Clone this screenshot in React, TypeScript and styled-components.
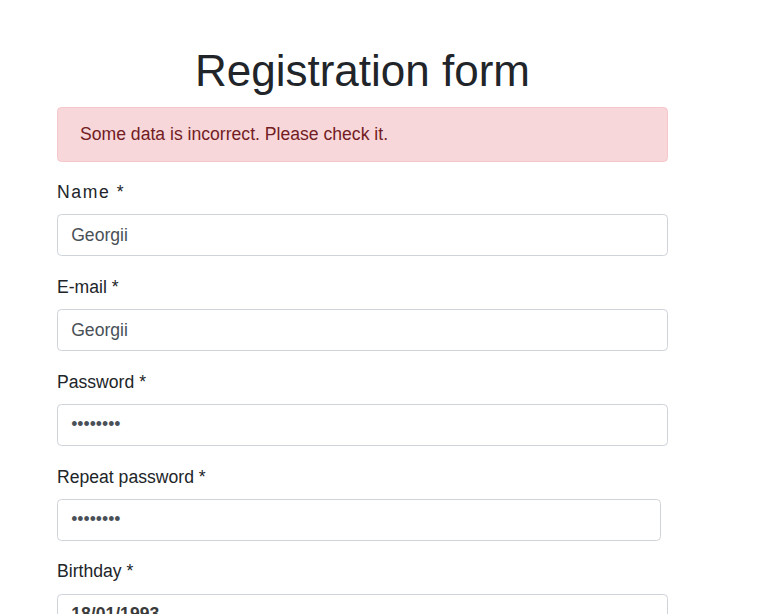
import React from "react";
import styled, { createGlobalStyle } from "styled-components";

const GlobalStyle = createGlobalStyle`
  html, body {
    margin: 0;
    padding: 0;
    background: #ffffff;
    font-family: "Liberation Sans", Arial, sans-serif;
    color: #212529;
  }
  * { box-sizing: border-box; }
`;

const Page = styled.div`
  width: 760px;
  height: 614px;
  overflow: hidden;
  padding: 45px 0 0 57px;
`;

const Container = styled.div`
  width: 611px;
`;

const Title = styled.h1`
  margin: 0 0 8.8px;
  font-size: 44px;
  font-weight: 400;
  line-height: 52.8px;
  text-align: center;
  color: #212529;
`;

const Alert = styled.div`
  margin-bottom: 17.6px;
  padding: 13.6px 22px;
  height: 55px;
  background: #f8d7da;
  border: 1px solid #f5c6cb;
  border-radius: 4.4px;
  color: #721c24;
  font-size: 17.6px;
  line-height: 26.4px;
`;

const Form = styled.form`
  display: flex;
  flex-direction: column;
  gap: 17.6px;
`;

const Group = styled.div`
  display: flex;
  flex-direction: column;
  gap: 8.8px;
`;

const Label = styled.label<{ $spaced?: boolean }>`
  font-size: 17.6px;
  line-height: 26.4px;
  color: #212529;
  letter-spacing: ${(p) => (p.$spaced ? "1.6px" : "0")};
`;

const Input = styled.input<{ $width?: number; $strong?: boolean }>`
  display: block;
  width: ${(p) => (p.$width ? `${p.$width}px` : "100%")};
  height: 42px;
  padding: 6.6px 13.2px;
  font-family: "Liberation Sans", Arial, sans-serif;
  font-size: 17.6px;
  line-height: 26.4px;
  font-weight: ${(p) => (p.$strong ? 700 : 400)};
  color: ${(p) => (p.$strong ? "#3a3a3a" : "#495057")};
  background: #ffffff;
  border: 1px solid #ced4da;
  border-radius: 4.4px;
  outline: none;
`;

const fields: {
  label: string;
  value: string;
  type: string;
  spaced?: boolean;
  width?: number;
  strong?: boolean;
}[] = [
  { label: "Name *", value: "Georgii", type: "text", spaced: true },
  { label: "E-mail *", value: "Georgii", type: "text" },
  { label: "Password *", value: "12345678", type: "password" },
  { label: "Repeat password *", value: "12345678", type: "password", width: 604 },
  { label: "Birthday *", value: "18/01/1993", type: "text", strong: true },
];

export default function App() {
  return (
    <>
      <GlobalStyle />
      <Page>
        <Container>
          <Title>Registration form</Title>
          <Alert>Some data is incorrect. Please check it.</Alert>
          <Form onSubmit={(e) => e.preventDefault()}>
            {fields.map((f) => (
              <Group key={f.label}>
                <Label $spaced={f.spaced}>{f.label}</Label>
                <Input
                  type={f.type}
                  defaultValue={f.value}
                  readOnly
                  $width={f.width}
                  $strong={f.strong}
                />
              </Group>
            ))}
          </Form>
        </Container>
      </Page>
    </>
  );
}
